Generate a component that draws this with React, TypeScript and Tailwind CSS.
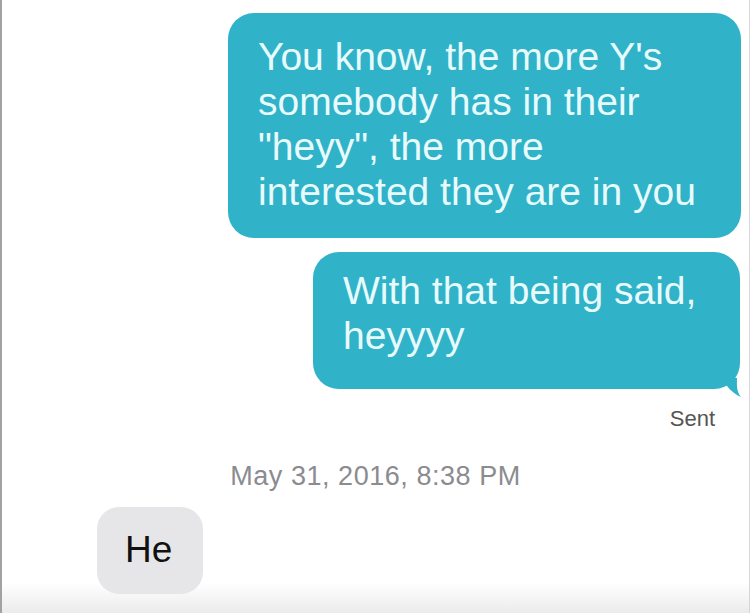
const FONT = { fontFamily: '"Liberation Sans", Arial, sans-serif' };

const App = () => {
  return (
    <div
      className="w-[750px] h-[613px] overflow-hidden flex flex-col border-l-2 border-r border-l-[#a2a2a2] border-r-[#d6d6d6] bg-linear-to-b from-white from-[95%] to-[#ebebeb]"
      style={FONT}
    >
      <div className="pt-[13px] flex flex-col">
        <div className="self-end mr-[8px] w-[513px] rounded-[26px] bg-[#30b2c9] text-[#e8fbfc] text-[39px] leading-[45px] pl-[30px] pt-[21px] pb-[24px]">
          <div>You know, the more Y's</div>
          <div>somebody has in their</div>
          <div>"heyy", the more</div>
          <div>interested they are in you</div>
        </div>

        <div className="relative self-end mr-[9px] mt-[14px] w-[427px] rounded-[26px] bg-[#30b2c9] text-[#e8fbfc] text-[39px] leading-[45px] pl-[30px] pt-[16px] pb-[31px]">
          <div>With that being said,</div>
          <div>heyyyy</div>
          <svg
            className="absolute right-[-2px] bottom-[-9px]"
            width="22"
            height="20"
            viewBox="0 0 22 20"
          >
            <path d="M2 0 C 7 9, 12 15, 21 19 C 16 13, 17 6, 17 0 Z" fill="#30b2c9" />
          </svg>
        </div>

        <div className="self-end mr-[34px] mt-[18px] text-[22px] leading-[24px] text-[#555555]">
          Sent
        </div>

        <div className="self-center mt-[30px] text-[27px] leading-[30px] tracking-[0.02em] text-[#8b8b90]">
          May 31, 2016, 8:38 PM
        </div>

        <div className="self-start ml-[95px] mt-[16px] w-[106px] rounded-[22px] bg-[#e6e6e8] text-[#111111] text-[37px] leading-[40px] pl-[28px] pt-[23px] pb-[24px]">
          He
        </div>
      </div>
    </div>
  );
};

export default App;
